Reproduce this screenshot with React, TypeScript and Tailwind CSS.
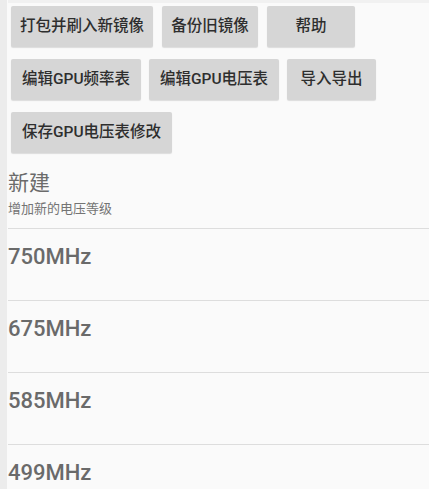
import React from "react";

const font = { fontFamily: "Roboto, 'Noto Sans CJK SC', sans-serif" };

function Btn({ label, w }: { label: string; w: string }) {
  return (
    <div
      className={`${w} h-[41px] shrink-0 rounded-[2px] bg-[#d6d6d6] shadow-[0_1px_1px_rgba(0,0,0,0.12)] flex items-center justify-center text-[15.5px] font-medium text-[#2e2e2e]`}
    >
      {label}
    </div>
  );
}

const freqs = ["750MHz", "675MHz", "585MHz", "499MHz"];

export default function App() {
  return (
    <div
      className="w-[429px] h-[489px] overflow-hidden bg-[#fafafa] flex"
      style={font}
    >
      <div className="w-[7px] shrink-0 bg-[#ececec]" />
      <div className="flex-1 flex flex-col pl-[1px]">
        <div className="h-[3px] bg-[#f1f1f1] shrink-0" />
        <div className="flex flex-col gap-[12px] pl-[3px] pt-[3px]">
          <div className="flex gap-[9px]">
            <Btn label="打包并刷入新镜像" w="w-[142px]" />
            <Btn label="备份旧镜像" w="w-[96px]" />
            <Btn label="帮助" w="w-[88px]" />
          </div>
          <div className="flex gap-[8px]">
            <Btn label="编辑GPU频率表" w="w-[130px]" />
            <Btn label="编辑GPU电压表" w="w-[130px]" />
            <Btn label="导入导出" w="w-[89px]" />
          </div>
          <div className="flex">
            <Btn label="保存GPU电压表修改" w="w-[161px]" />
          </div>
        </div>
        <div className="pt-[18px] pb-[11px]">
          <div className="text-[21px] leading-[25px] text-[#6b6b6b]">新建</div>
          <div className="mt-[5px] text-[13px] leading-[16px] text-[#747474]">
            增加新的电压等级
          </div>
        </div>
        {freqs.map((f) => (
          <div key={f} className="border-t border-[#dddddd]">
            <div className="pt-[14px] pb-[29px] text-[22px] leading-[28px] font-medium text-[#6a6a6a]">
              {f}
            </div>
          </div>
        ))}
      </div>
    </div>
  );
}
